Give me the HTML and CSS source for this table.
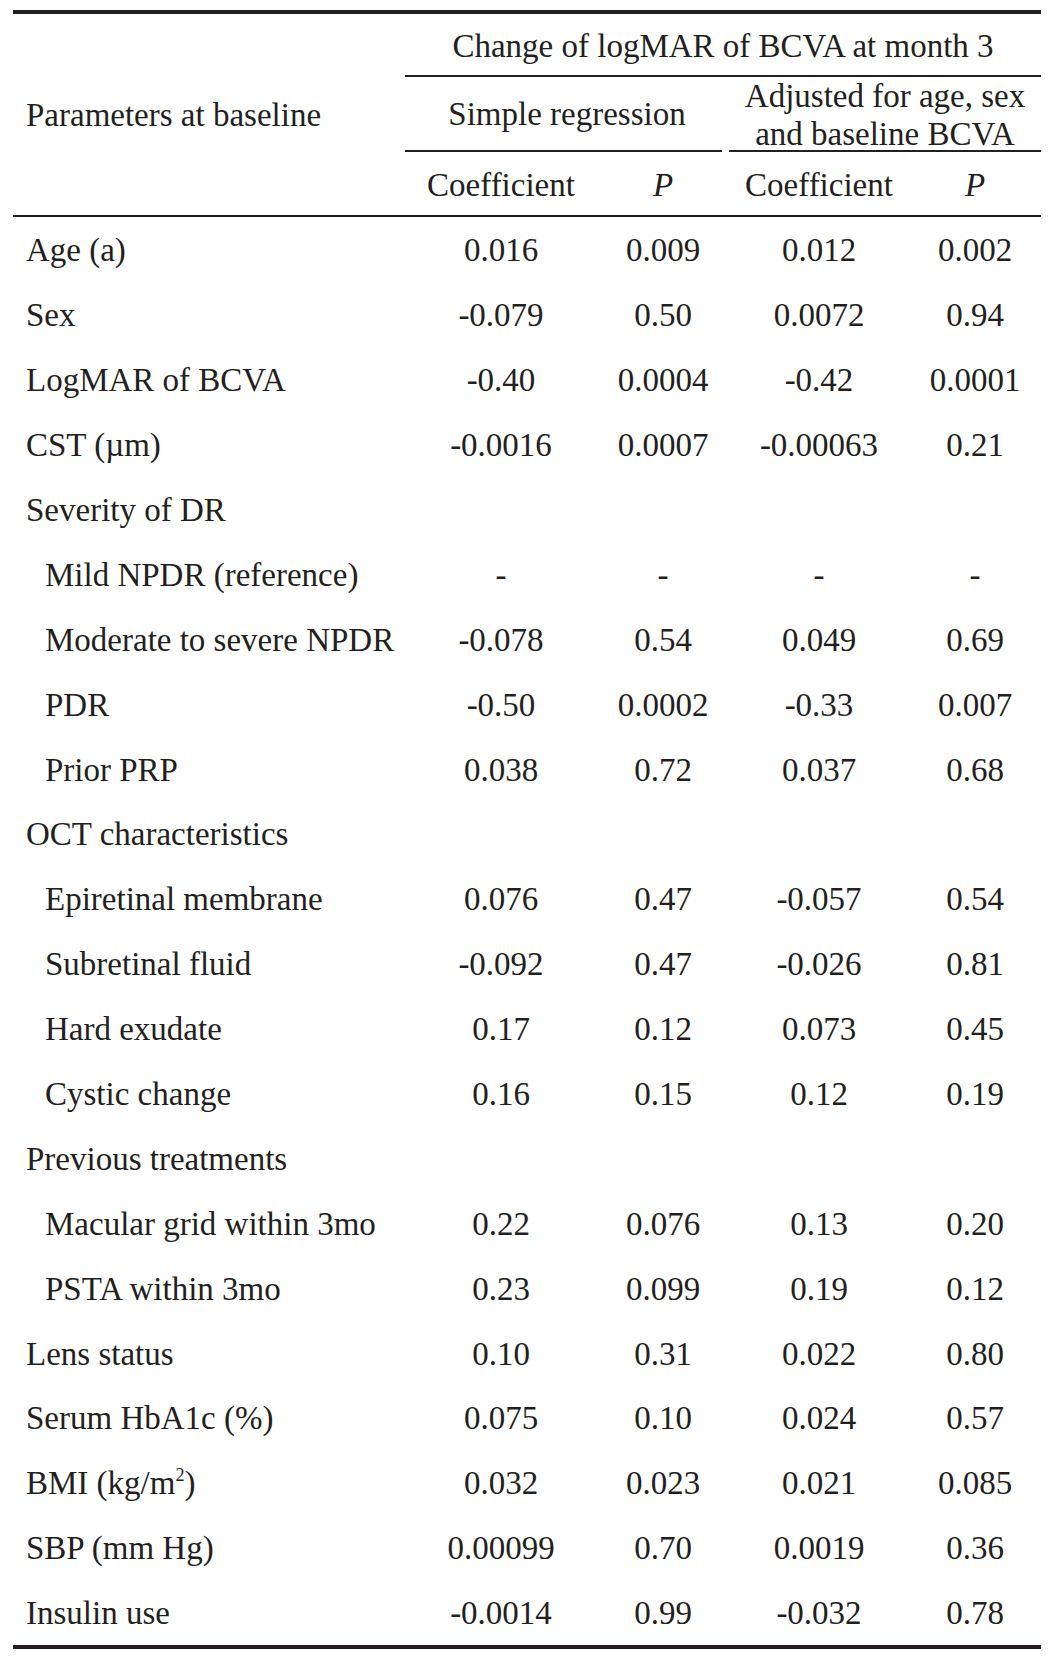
FILE: index.html
```html
<!DOCTYPE html>
<html>
<head>
<meta charset="utf-8">
<link rel="stylesheet" href="styles.css">
</head>
<body>
<table class="tbl">
  <colgroup>
    <col class="c1"><col class="c2"><col class="c3"><col class="c4"><col class="c5">
  </colgroup>
  <thead>
    <tr class="h1">
      <th class="param" rowspan="3">Parameters at baseline</th>
      <th class="span-all" colspan="4">Change of logMAR of BCVA at month 3</th>
    </tr>
    <tr class="h2">
      <th class="simple" colspan="2">Simple regression</th>
      <th class="adjusted" colspan="2"><span class="adj-text">Adjusted for age, sex<br>and baseline BCVA</span></th>
    </tr>
    <tr class="h3">
      <th>Coefficient</th>
      <th><i>P</i></th>
      <th>Coefficient</th>
      <th><i>P</i></th>
    </tr>
  </thead>
  <tbody>
    <tr><td>Age (a)</td><td>0.016</td><td>0.009</td><td>0.012</td><td>0.002</td></tr>
    <tr><td>Sex</td><td>-0.079</td><td>0.50</td><td>0.0072</td><td>0.94</td></tr>
    <tr><td>LogMAR of BCVA</td><td>-0.40</td><td>0.0004</td><td>-0.42</td><td>0.0001</td></tr>
    <tr><td>CST (µm)</td><td>-0.0016</td><td>0.0007</td><td>-0.00063</td><td>0.21</td></tr>
    <tr><td>Severity of DR</td><td></td><td></td><td></td><td></td></tr>
    <tr><td class="sub">Mild NPDR (reference)</td><td>-</td><td>-</td><td>-</td><td>-</td></tr>
    <tr><td class="sub">Moderate to severe NPDR</td><td>-0.078</td><td>0.54</td><td>0.049</td><td>0.69</td></tr>
    <tr><td class="sub">PDR</td><td>-0.50</td><td>0.0002</td><td>-0.33</td><td>0.007</td></tr>
    <tr><td class="sub">Prior PRP</td><td>0.038</td><td>0.72</td><td>0.037</td><td>0.68</td></tr>
    <tr><td>OCT characteristics</td><td></td><td></td><td></td><td></td></tr>
    <tr><td class="sub">Epiretinal membrane</td><td>0.076</td><td>0.47</td><td>-0.057</td><td>0.54</td></tr>
    <tr><td class="sub">Subretinal fluid</td><td>-0.092</td><td>0.47</td><td>-0.026</td><td>0.81</td></tr>
    <tr><td class="sub">Hard exudate</td><td>0.17</td><td>0.12</td><td>0.073</td><td>0.45</td></tr>
    <tr><td class="sub">Cystic change</td><td>0.16</td><td>0.15</td><td>0.12</td><td>0.19</td></tr>
    <tr><td>Previous treatments</td><td></td><td></td><td></td><td></td></tr>
    <tr><td class="sub">Macular grid within 3mo</td><td>0.22</td><td>0.076</td><td>0.13</td><td>0.20</td></tr>
    <tr><td class="sub">PSTA within 3mo</td><td>0.23</td><td>0.099</td><td>0.19</td><td>0.12</td></tr>
    <tr><td>Lens status</td><td>0.10</td><td>0.31</td><td>0.022</td><td>0.80</td></tr>
    <tr><td>Serum HbA1c (%)</td><td>0.075</td><td>0.10</td><td>0.024</td><td>0.57</td></tr>
    <tr><td>BMI (kg/m<sup>2</sup>)</td><td>0.032</td><td>0.023</td><td>0.021</td><td>0.085</td></tr>
    <tr><td>SBP (mm Hg)</td><td>0.00099</td><td>0.70</td><td>0.0019</td><td>0.36</td></tr>
    <tr><td>Insulin use</td><td>-0.0014</td><td>0.99</td><td>-0.032</td><td>0.78</td></tr>
  </tbody>
</table>
</body>
</html>
```

FILE: styles.css
```css
html, body {
  margin: 0;
  padding: 0;
  background: #ffffff;
}

body {
  font-family: "Liberation Serif", "Times New Roman", serif;
  font-size: 33px;
  color: #231f20;
}

.tbl {
  margin: 10px 0 0 13px;
  width: 1028px;
  table-layout: fixed;
  border-collapse: separate;
  border-spacing: 0;
  border-top: 4px solid #231f20;
  border-bottom: 4px solid #231f20;
}

.c1 { width: 392px; }
.c2 { width: 192px; }
.c3 { width: 132px; }
.c4 { width: 180px; }
.c5 { width: 132px; }

.tbl th,
.tbl td {
  padding: 0;
  font-weight: normal;
  text-align: center;
  vertical-align: middle;
  line-height: 37px;
  white-space: nowrap;
}

.tbl th i {
  font-style: italic;
}

.h1 { height: 63px; }
.h2 { height: 75px; }
.h3 { height: 65px; }

.tbl th.param {
  text-align: left;
  padding-left: 13px;
  padding-top: 1px;
  border-bottom: 2px solid #231f20;
}

.tbl th.span-all {
  padding-top: 4px;
  border-bottom: 2px solid #231f20;
}

.tbl th.simple {
  padding-top: 2px;
  padding-bottom: 2px;
  background: linear-gradient(#231f20, #231f20) 0 100% / calc(100% - 7px) 2px no-repeat;
}

.tbl th.adjusted {
  vertical-align: top;
  padding-top: 1px;
  padding-bottom: 2px;
  background: linear-gradient(#231f20, #231f20) 100% 100% / calc(100% + 1px) 2px no-repeat;
}

.adj-text {
  display: block;
  height: 72px;
  line-height: 37.5px;
}

.tbl .h3 th {
  padding-top: 3px;
  border-bottom: 2px solid #231f20;
}

.tbl tbody tr {
  height: 64.9px;
}

.tbl tbody td {
  padding-top: 3px;
}

.tbl td:first-child {
  text-align: left;
  padding-left: 13px;
}

.tbl td.sub {
  padding-left: 32px;
}

sup {
  font-size: 0.55em;
  line-height: 0;
  vertical-align: 0.7em;
}
```
